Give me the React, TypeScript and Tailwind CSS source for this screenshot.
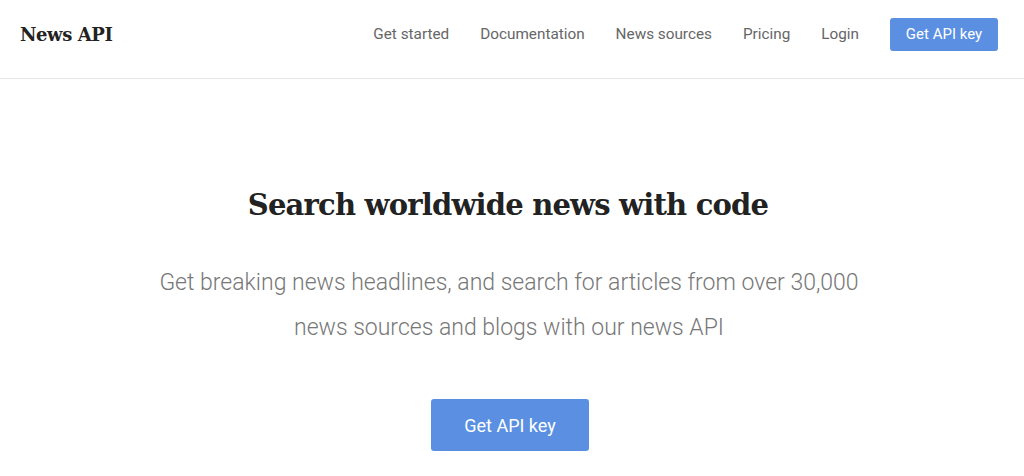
export default function App() {
  return (
    <div className="w-full min-h-[476px] bg-white font-['Roboto',sans-serif]">
      {/* Header */}
      <header className="h-[79px] border-b border-[#e6e6e6] flex items-start justify-between pl-[20px] pr-[26px] pt-[18px]">
        <div className="font-['DejaVu_Serif',serif] font-bold text-[18px] leading-[33px] text-[#222] tracking-[-0.4px]">
          News API
        </div>
        <nav className="flex items-center text-[15.3px] text-[#666]">
          <a className="mr-[31px]">Get started</a>
          <a className="mr-[31px]">Documentation</a>
          <a className="mr-[31px]">News sources</a>
          <a className="mr-[31px]">Pricing</a>
          <a className="mr-[31px]">Login</a>
          <a className="h-[33px] w-[108px] flex items-center justify-center rounded-[3px] bg-[#5a8fe2] text-white text-[15px]">
            Get API key
          </a>
        </nav>
      </header>

      {/* Hero */}
      <section className="flex flex-col items-center pt-[106px]">
        <h1 className="font-['DejaVu_Serif',serif] font-bold text-[29px] text-[#222] tracking-[-0.8px] leading-[40px] -ml-[8px]">
          Search worldwide news with code
        </h1>
        <p className="mt-[35px] text-center font-light text-[23px] leading-[45px] text-[#777] w-[780px] -ml-[6px]">
          Get breaking news headlines, and search for articles from over 30,000
          <br />
          news sources and blogs with our news API
        </p>
        <a className="mt-[49px] h-[52px] w-[158px] flex items-center justify-center rounded-[3px] bg-[#5a8fe2] text-white text-[18px] -ml-[4px]">
          Get API key
        </a>
      </section>
    </div>
  );
}
